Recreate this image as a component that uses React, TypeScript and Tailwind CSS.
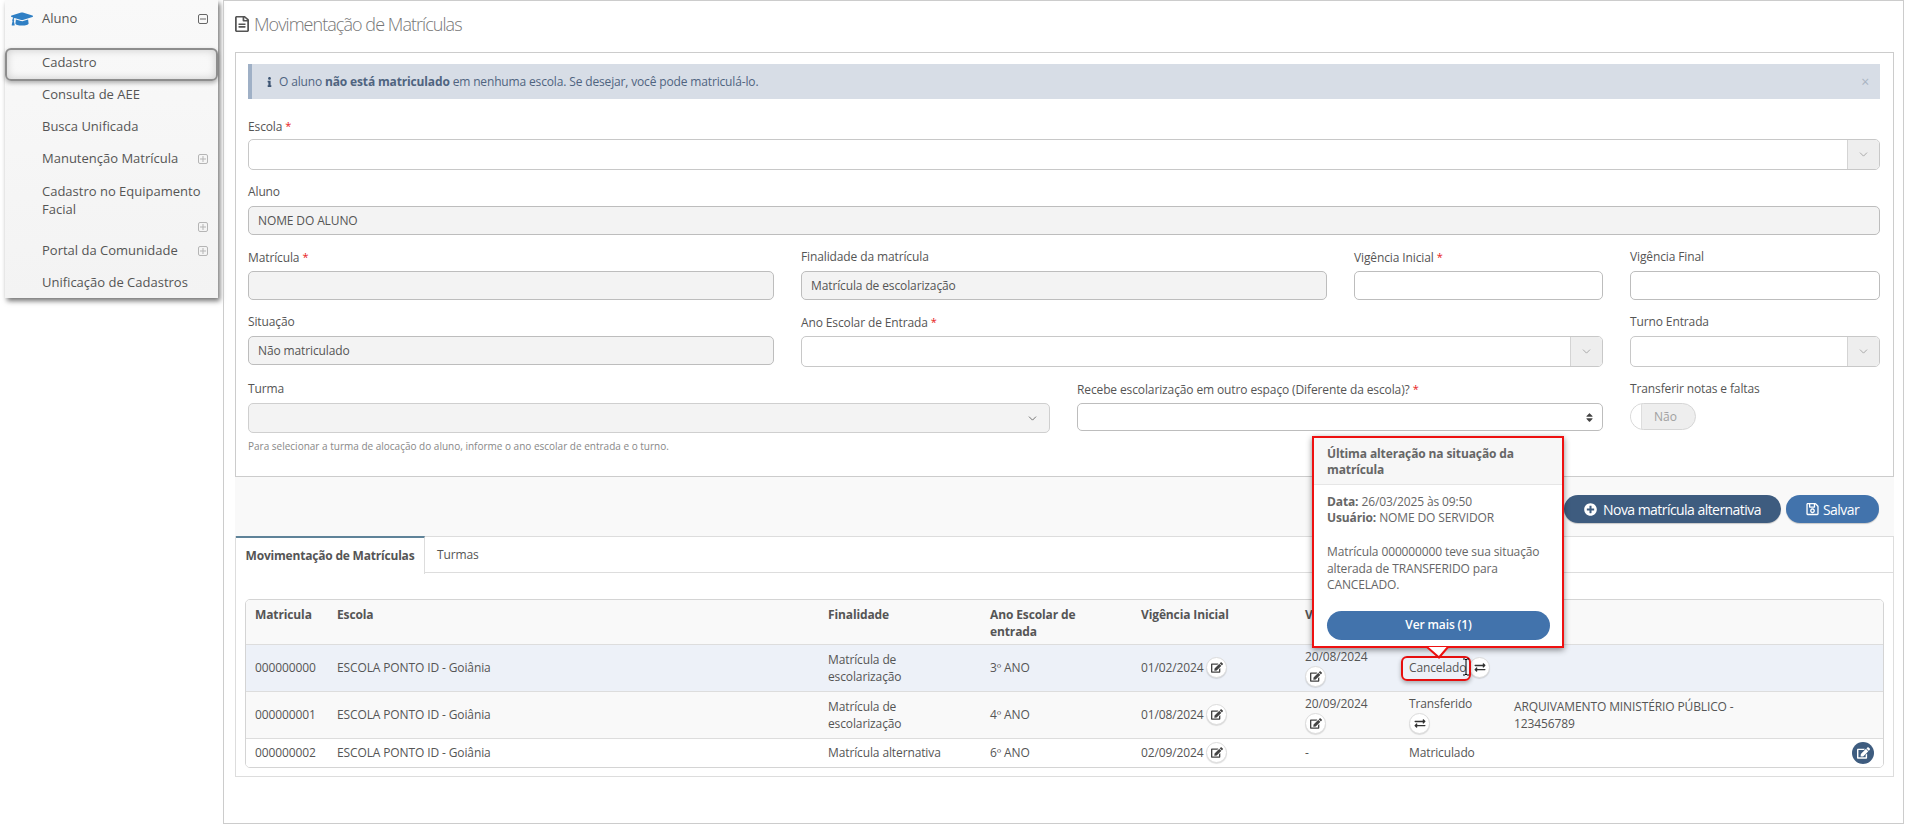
import React from "react";
import { FaGraduationCap, FaRegFileAlt, FaInfo, FaPlusCircle, FaRegSave, FaEdit, FaExchangeAlt, FaSort } from "react-icons/fa";
import { ChevronDown } from "lucide-react";

function SquareIcon({ plus }: { plus?: boolean }) {
  return (
    <svg width="10" height="10" viewBox="0 0 10 10" fill="none" stroke={plus ? "#b5b5b5" : "#666"} strokeWidth="1">
      <rect x="0.5" y="0.5" width="9" height="9" rx="1.5" />
      <path d="M2 5h6" />
      {plus ? <path d="M5 2v6" /> : null}
    </svg>
  );
}

function MenuItem({ children, plus }: { children: React.ReactNode; plus?: boolean }) {
  return (
    <div className="flex h-[32px] items-center justify-between pl-[37px] pr-[10px] text-[13px] text-[#555]">
      <span>{children}</span>
      {plus ? <SquareIcon plus /> : null}
    </div>
  );
}

function Star() {
  return <span className="ml-[3px] align-[1px] text-[11px] text-[#e82020]">*</span>;
}

function Label({ text, req }: { text: string; req?: boolean }) {
  return (
    <div className="mb-[5px] h-[18px] text-[12px] leading-[18px] tracking-[-0.12px] text-[#555]">
      {text}
      {req ? <Star /> : null}
    </div>
  );
}

function TextBox({ value, disabled }: { value?: string; disabled?: boolean }) {
  return (
    <div className={`flex h-[29px] items-center rounded-[5px] border border-[#bdbdbd] px-[9px] text-[12px] tracking-[-0.12px] text-[#555] ${disabled ? "bg-[#f3f3f3]" : "bg-white"}`}>
      {value}
    </div>
  );
}

function AddonSelect() {
  return (
    <div className="flex h-[31px] items-stretch justify-end overflow-hidden rounded-[5px] border border-[#c8c8c8] bg-white">
      <div className="flex w-[32px] items-center justify-center border-l border-[#d4d4d4] bg-[#eeeeee]">
        <ChevronDown size={13} color="#9a9a9a" strokeWidth={1.5} />
      </div>
    </div>
  );
}

function RoundBtn({ children, className = "" }: { children: React.ReactNode; className?: string }) {
  return (
    <span className={`inline-flex h-[21px] w-[21px] shrink-0 items-center justify-center rounded-full border border-[#dcdcdc] bg-white text-[#444] shadow-[0_1px_1px_rgba(0,0,0,0.12)] ${className}`}>
      {children}
    </span>
  );
}

function EditBtn({ className }: { className?: string }) {
  return (
    <RoundBtn className={className}>
      <FaEdit className="ml-[1px] h-[11px] w-[12px]" />
    </RoundBtn>
  );
}

function SwapBtn({ className }: { className?: string }) {
  return (
    <RoundBtn className={className}>
      <FaExchangeAlt className="h-[11px] w-[12px] text-[#333]" />
    </RoundBtn>
  );
}

const cell = "px-[10px] align-middle";
const firstCell = "pl-[9px] pr-[10px] align-middle";

function DateCell({ date }: { date: string }) {
  return (
    <td className={cell}>
      <span className="inline-flex items-center gap-[2px]">
        {date}
        <EditBtn />
      </span>
    </td>
  );
}

function StackCell({ text, children }: { text: string; children: React.ReactNode }) {
  return (
    <td className={cell}>
      <div className="flex flex-col items-start gap-[1px] leading-[17px]">
        <span>{text}</span>
        {children}
      </div>
    </td>
  );
}

const th = "px-[10px] pt-[6px] align-top text-left font-bold";

export default function App() {
  return (
    <div className="relative flex h-[824px] w-[1906px] overflow-hidden bg-white text-[#555]" style={{ fontFamily: '"Open Sans", sans-serif' }}>
      <aside className="w-[223px] shrink-0 pl-[5px]">
        <div className="h-[298px] w-[213px] bg-gradient-to-b from-[#f9f9f9] to-[#f3f3f3] shadow-[2px_3px_5px_rgba(0,0,0,0.55)]">
          <div className="flex h-[48px] items-start justify-between pr-[10px] pt-[9px]">
            <div className="flex items-center text-[13px] text-[#555]">
              <FaGraduationCap className="ml-[6px] mr-[9px] h-[20px] w-[22px] text-[#2f7fc4]" />
              <span>Aluno</span>
            </div>
            <div className="mt-[5px]"><SquareIcon /></div>
          </div>
          <div className="-mb-[2px] flex h-[33px] items-center rounded-[6px] border-2 border-[#8d8d8d] pb-[3px] pl-[35px] text-[13px] text-[#555] shadow-[inset_0_0_8px_rgba(0,0,0,0.18),0_2px_4px_rgba(0,0,0,0.3)]">
            Cadastro
          </div>
          <MenuItem>Consulta de AEE</MenuItem>
          <MenuItem>Busca Unificada</MenuItem>
          <MenuItem plus>Manutenção Matrícula</MenuItem>
          <div className="h-[60px] pl-[37px] pr-[10px] pt-[7px] text-[13px] leading-[18px] text-[#555]">
            Cadastro no Equipamento Facial
            <div className="flex justify-end pt-[4px]"><SquareIcon plus /></div>
          </div>
          <MenuItem plus>Portal da Comunidade</MenuItem>
          <MenuItem>Unificação de Cadastros</MenuItem>
        </div>
      </aside>

      <main className="h-[824px] w-[1681px] border border-[#cccccc] pl-[11px] pr-[9px]">
        <div className="flex h-[51px] items-center pb-[5px]">
          <FaRegFileAlt preserveAspectRatio="none" className="mr-[5px] h-[16px] w-[14px] text-[#555]" />
          <h1 className="text-[18px] font-light tracking-[-0.95px] text-[#777]">Movimentação de Matrículas</h1>
        </div>

        <section className="h-[425px] border border-[#cccccc] pl-[12px] pr-[13px] pt-[11px]">
          <div className="flex h-[35px] items-center border-l-4 border-[#9fb0c6] bg-[#d7dde6] pl-[15px] pr-[11px] text-[12px] tracking-[-0.15px] text-[#4f6480]">
            <FaInfo className="mr-[7px] h-[10px] w-[5px] text-[#3d5573]" />
            <span>O aluno <b>não está matriculado</b> em nenhuma escola. Se desejar, você pode matriculá-lo.</span>
            <span className="ml-auto text-[14px] text-[#a9b4c2]">×</span>
          </div>

          <div className="mt-[18px]">
            <div className="mb-[4px] h-[18px] text-[12px] leading-[18px] tracking-[-0.12px] text-[#555]">Escola<Star /></div>
            <AddonSelect />
          </div>

          <div className="mt-[13px]">
            <Label text="Aluno" />
            <TextBox value="NOME DO ALUNO" disabled />
          </div>

          <div className="mt-[13px] flex gap-[27px]">
            <div className="w-[526px]"><Label text="Matrícula" req /><TextBox disabled /></div>
            <div className="w-[526px]"><Label text="Finalidade da matrícula" /><TextBox value="Matrícula de escolarização" disabled /></div>
            <div className="w-[249px]"><Label text="Vigência Inicial" req /><TextBox /></div>
            <div className="w-[250px]"><Label text="Vigência Final" /><TextBox /></div>
          </div>

          <div className="mt-[13px] flex gap-[27px]">
            <div className="w-[526px]"><Label text="Situação" /><TextBox value="Não matriculado" disabled /></div>
            <div className="w-[802px]"><Label text="Ano Escolar de Entrada" req /><AddonSelect /></div>
            <div className="w-[250px]"><Label text="Turno Entrada" /><AddonSelect /></div>
          </div>

          <div className="mt-[13px] flex gap-[27px]">
            <div className="w-[802px]">
              <div className="mb-[5px] h-[18px] text-[12px] leading-[18px] tracking-[-0.12px] text-[#555]">Turma</div>
              <div className="flex h-[30px] items-center justify-end rounded-[5px] border border-[#cfcfcf] bg-[#f3f3f3] pr-[10px]">
                <ChevronDown size={13} color="#555" strokeWidth={1.5} />
              </div>
              <div className="mt-[6px] text-[10px] leading-[14px] text-[#888]">Para selecionar a turma de alocação do aluno, informe o ano escolar de entrada e o turno.</div>
            </div>
            <div className="w-[526px]">
              <div className="mb-[5px] h-[18px] text-[12px] leading-[18px] tracking-[-0.12px] text-[#555]">Recebe escolarização em outro espaço (Diferente da escola)?<Star /></div>
              <div className="flex h-[28px] items-center justify-end rounded-[5px] border border-[#bdbdbd] bg-white pr-[9px]">
                <FaSort className="h-[11px] w-[7px] text-[#444]" />
              </div>
            </div>
            <div className="w-[250px]">
              <div className="mb-[5px] h-[18px] text-[12px] leading-[18px] tracking-[-0.12px] text-[#555]">Transferir notas e faltas</div>
              <div className="flex h-[27px] w-[66px] items-center overflow-hidden rounded-full border border-[#d6d6d6] bg-[#eeeeee]">
                <span className="h-full w-[11px] rounded-l-full rounded-r-[50%] border-r border-[#dddddd] bg-white" />
                <span className="flex-1 pr-[6px] text-center text-[12px] text-[#a0a0a0]">Não</span>
              </div>
            </div>
          </div>
        </section>

        <div className="flex h-[59px] items-start justify-end gap-[5px] bg-[#f9f9f9] pr-[15px] pt-[18px]">
          <button className="flex h-[28px] w-[217px] items-center justify-center gap-[6px] rounded-full bg-[#3e5c7f] text-[14px] tracking-[-0.55px] text-white shadow-[0_1px_1px_rgba(0,0,0,0.2)]">
            <FaPlusCircle className="h-[13px] w-[13px]" />
            Nova matrícula alternativa
          </button>
          <button className="flex h-[28px] w-[93px] items-center justify-center gap-[4px] rounded-full bg-[#4273ac] text-[14px] tracking-[-0.55px] text-white shadow-[0_1px_1px_rgba(0,0,0,0.2)]">
            <FaRegSave className="h-[14px] w-[13px]" />
            Salvar
          </button>
        </div>

        <section className="h-[241px] border border-[#dddddd]">
          <div className="flex h-[36px] border-b border-[#dddddd]">
            <div className="-mt-px -mb-px flex h-[38px] w-[189px] items-center justify-center border-r border-t-2 border-[#dddddd] border-t-[#5f8399] bg-white text-[12px] font-bold tracking-[-0.2px] text-[#555]">
              Movimentação de Matrículas
            </div>
            <div className="flex items-center pl-[12px] text-[12px] tracking-[-0.12px] text-[#555]">Turmas</div>
          </div>

          <div className="ml-[9px] mr-[9px] mt-[26px] overflow-hidden rounded-[5px] border border-[#d4d4d4]">
            <table className="w-full table-fixed border-collapse text-[12px] leading-[17px] tracking-[-0.12px] text-[#555]">
              <colgroup>
                <col className="w-[81px]" />
                <col className="w-[491px]" />
                <col className="w-[162px]" />
                <col className="w-[151px]" />
                <col className="w-[164px]" />
                <col className="w-[104px]" />
                <col className="w-[105px]" />
                <col className="w-[250px]" />
                <col />
              </colgroup>
              <thead>
                <tr className="h-[44px] border-b border-[#dddddd] bg-[#f9f9f9]">
                  <th className="pl-[9px] pr-[10px] pt-[6px] align-top text-left font-bold">Matricula</th>
                  <th className={th}>Escola</th>
                  <th className={th}>Finalidade</th>
                  <th className={th}>Ano Escolar de entrada</th>
                  <th className={th}>Vigência Inicial</th>
                  <th className={th}>Vigência Final</th>
                  <th className={th} />
                  <th className={th} />
                  <th />
                </tr>
              </thead>
              <tbody>
                <tr className="h-[47px] border-b border-[#dddddd] bg-[#edf1f8]">
                  <td className={firstCell}>000000000</td>
                  <td className={cell}>ESCOLA PONTO ID - Goiânia</td>
                  <td className={cell}>Matrícula de escolarização</td>
                  <td className={cell}>3º ANO</td>
                  <DateCell date="01/02/2024" />
                  <StackCell text="20/08/2024"><EditBtn /></StackCell>
                  <td className={cell}>
                    <span className="inline-flex items-center gap-[3px] whitespace-nowrap">
                      Cancelado
                      <SwapBtn />
                    </span>
                  </td>
                  <td className={cell} />
                  <td />
                </tr>
                <tr className="h-[47px] border-b border-[#dddddd] bg-[#f9f9f9]">
                  <td className={firstCell}>000000001</td>
                  <td className={cell}>ESCOLA PONTO ID - Goiânia</td>
                  <td className={cell}>Matrícula de escolarização</td>
                  <td className={cell}>4º ANO</td>
                  <DateCell date="01/08/2024" />
                  <StackCell text="20/09/2024"><EditBtn /></StackCell>
                  <StackCell text="Transferido"><SwapBtn /></StackCell>
                  <td className={cell}>ARQUIVAMENTO MINISTÉRIO PÚBLICO - 123456789</td>
                  <td />
                </tr>
                <tr className="h-[29px] bg-white">
                  <td className={firstCell}>000000002</td>
                  <td className={cell}>ESCOLA PONTO ID - Goiânia</td>
                  <td className={cell}>Matrícula alternativa</td>
                  <td className={cell}>6º ANO</td>
                  <DateCell date="02/09/2024" />
                  <td className={cell}>-</td>
                  <td className={cell}>Matriculado</td>
                  <td className={cell} />
                  <td className="pr-[9px] text-right align-middle">
                    <span className="inline-flex h-[22px] w-[22px] items-center justify-center rounded-full bg-[#3e5c7f] text-white">
                      <FaEdit className="ml-[1px] h-[12px] w-[13px]" />
                    </span>
                  </td>
                </tr>
              </tbody>
            </table>
          </div>
        </section>
      </main>

      {/* Annotated popover over the table */}
      <div className="absolute left-[1312px] top-[436px] flex h-[212px] w-[252px] flex-col border-2 border-[#ee1111] bg-white shadow-[0_2px_6px_rgba(0,0,0,0.45)]">
        <div className="h-[47px] border-b border-[#e6e6e6] bg-[#f7f7f7] px-[13px] pt-[8px] text-[12px] font-bold leading-[16px] tracking-[-0.12px] text-[#666]">
          Última alteração na situação da matrícula
        </div>
        <div className="px-[13px] pt-[9px] text-[12px] leading-[16px] tracking-[-0.12px] text-[#666]">
          <div><b>Data:</b> 26/03/2025 às 09:50</div>
          <div><b>Usuário:</b> NOME DO SERVIDOR</div>
          <div className="mt-[18px] leading-[16.5px]">Matrícula 000000000 teve sua situação alterada de TRANSFERIDO para CANCELADO.</div>
          <button className="mt-[17px] flex h-[29px] w-[223px] items-center justify-center rounded-full bg-[#4273ac] text-[12px] font-semibold text-white">
            Ver mais (1)
          </button>
        </div>
      </div>
      <svg className="absolute left-[1426px] top-[646px]" width="24" height="13" viewBox="0 0 24 13">
        <path d="M1 1 L13 11.5 L22 1 Z" fill="#ffffff" stroke="none" />
        <path d="M1 1 L13 11.5 L22 1" fill="none" stroke="#ee1111" strokeWidth="2" />
      </svg>
      <div className="absolute left-[1401px] top-[656px] h-[25px] w-[70px] rounded-[6px] border-2 border-[#e60f0f] shadow-[0_2px_4px_rgba(0,0,0,0.3)]" />
      <svg className="absolute left-[1462px] top-[658px]" width="8" height="18" viewBox="0 0 8 18">
        <path d="M1 1h2l1 1 1-1h2M4 2v14M1 17h2l1-1 1 1h2" fill="none" stroke="#000" strokeWidth="1" />
      </svg>
    </div>
  );
}
